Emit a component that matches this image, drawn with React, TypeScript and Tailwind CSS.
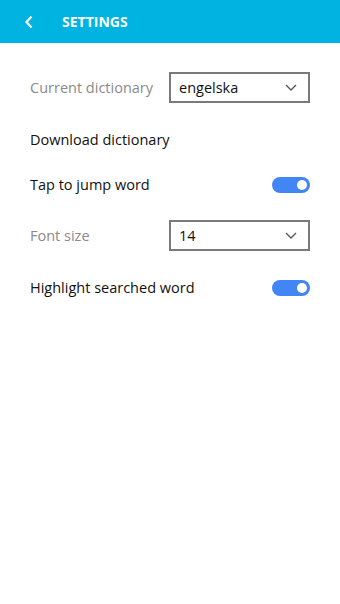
import React, { useState } from 'react';

const Chevron = () => (
  <svg width="12" height="7" viewBox="0 0 12 7" fill="none" className="shrink-0">
    <path d="M1 1l5 5 5-5" stroke="#555" strokeWidth="1.3" />
  </svg>
);

const Select = ({ value }: { value: string }) => (
  <div className="w-[141px] h-[31px] border-2 border-[#7a7a7a] flex items-center justify-between pl-[8px] pr-[11px] text-[14.5px] text-[#111]">
    <span>{value}</span>
    <Chevron />
  </div>
);

const Toggle = ({ on, onClick }: { on: boolean; onClick: () => void }) => (
  <button
    onClick={onClick}
    className={`w-[38px] h-[16px] rounded-full flex items-center px-[3px] ${on ? 'bg-[#4285f4] justify-end' : 'bg-gray-300 justify-start'}`}
  >
    <span className="w-[10px] h-[10px] rounded-full bg-white" />
  </button>
);

export default function App() {
  const [tap, setTap] = useState(true);
  const [highlight, setHighlight] = useState(true);

  return (
    <div className="w-[340px] h-[604px] bg-white" style={{ fontFamily: '"Open Sans", "Noto Sans", sans-serif' }}>
      {/* header */}
      <header className="h-[43px] bg-[#00b3e0] flex items-center text-white">
        <svg width="10" height="14" viewBox="0 0 10 14" className="ml-[24px]" fill="none">
          <path d="M7.5 1.5L2.5 7l5 5.5" stroke="white" strokeWidth="2.2" />
        </svg>
        <h1 className="ml-[28px] text-[14px] font-bold">SETTINGS</h1>
      </header>

      <div className="px-[30px] pt-[29px] flex flex-col text-[14.5px]">
        <div className="h-[31px] flex items-center justify-between">
          <span className="text-[#8a8a8a]">Current dictionary</span>
          <Select value="engelska" />
        </div>

        <div className="h-[30px] mt-[22px] flex items-center">
          <span className="text-[#111]">Download dictionary</span>
        </div>

        <div className="h-[30px] mt-[15px] flex items-center justify-between">
          <span className="text-[#111]">Tap to jump word</span>
          <Toggle on={tap} onClick={() => setTap(!tap)} />
        </div>

        <div className="h-[31px] mt-[20px] flex items-center justify-between">
          <span className="text-[#8a8a8a]">Font size</span>
          <Select value="14" />
        </div>

        <div className="h-[30px] mt-[22px] flex items-center justify-between">
          <span className="text-[#111]">Highlight searched word</span>
          <Toggle on={highlight} onClick={() => setHighlight(!highlight)} />
        </div>
      </div>
    </div>
  );
}
